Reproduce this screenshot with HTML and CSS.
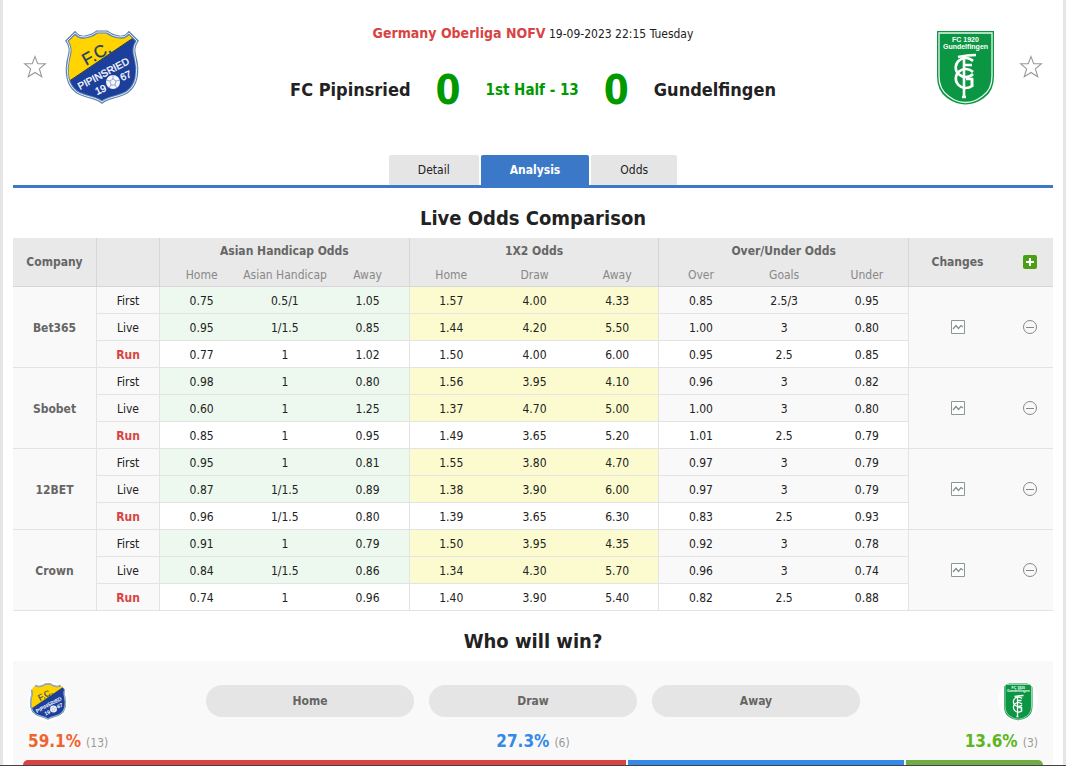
FILE: index.html
```html
<!DOCTYPE html>
<html lang="en">
<head>
<meta charset="utf-8">
<title>FC Pipinsried vs Gundelfingen</title>
<link rel="stylesheet" href="styles.css">
</head>
<body>
<svg class="defs" aria-hidden="true">
  <symbol id="star" viewBox="0 0 22 22"><path fill="none" stroke="#999" d="M11 1.500L13.500 8H20.500L15 12.700L17.200 20L11 16L4.800 20L7 12.700L1.500 8H8.500Z"/></symbol>
  <symbol id="chart" viewBox="0 0 14 14"><path fill="#fff" stroke="#8a9a93" d="M.5.5H13.500V13.500H.5Z"/><path fill="none" stroke="#7f8f88" stroke-width="1.200" d="M2 9L5 5.500L7.500 8.500L10 5.500L12 7"/></symbol>
  <symbol id="minus" viewBox="0 0 14 14"><circle cx="7" cy="7" r="6.500" fill="none" stroke="#888"/><path stroke="#888" d="M3 7.500H11"/></symbol>
  <symbol id="plus" viewBox="0 0 14 14"><rect width="14" height="14" rx="2" fill="#4a9f14"/><path stroke="#fff" stroke-width="2" d="M3 7H11M7 3V11"/></symbol>
</svg>
<div class="page">
  <main class="content">
    <header class="match">
      <button class="icon-btn" aria-label="Follow FC Pipinsried"><svg class="star"><use href="#star"/></svg></button>
      <svg class="crest" viewBox="0 0 80 80" role="img" aria-label="FC Pipinsried">
        <g id="pipinsried">
          <clipPath id="shield-clip"><path d="M13 7Q17 12 23 11Q30 10 35 6H45Q50 10 57 11Q63 12 67 7L75 15Q70 22 73 31Q76 42 74 52Q72 61 65 66C57 71 46 71 40 76C34 71 23 71 15 66Q8 61 6 52Q4 42 7 31Q10 22 5 15Z"/></clipPath>
          <g clip-path="url(#shield-clip)">
            <path fill="#ffd400" d="M0 0H80V80H0Z"/>
            <path fill="#1c3f9c" d="M0 60L80 6V80H0Z"/>
            <path stroke="#2c3d50" d="M0 60L80 6"/>
          </g>
          <path fill="none" stroke="#5b7fae" stroke-width="3" d="M13 7Q17 12 23 11Q30 10 35 6H45Q50 10 57 11Q63 12 67 7L75 15Q70 22 73 31Q76 42 74 52Q72 61 65 66C57 71 46 71 40 76C34 71 23 71 15 66Q8 61 6 52Q4 42 7 31Q10 22 5 15Z"/>
          <path fill="none" stroke="#e4edf5" d="M13 7Q17 12 23 11Q30 10 35 6H45Q50 10 57 11Q63 12 67 7L75 15Q70 22 73 31Q76 42 74 52Q72 61 65 66C57 71 46 71 40 76C34 71 23 71 15 66Q8 61 6 52Q4 42 7 31Q10 22 5 15Z"/>
          <g font-family="Liberation Sans, sans-serif">
            <text font-size="17" fill="#1d3f63" stroke="#1d3f63" stroke-width=".3" transform="translate(24 40) rotate(-29)">F.C.</text>
            <g fill="#fff" stroke="#fff" stroke-width=".3">
              <text font-size="10" transform="translate(18 64) rotate(-28)">PIPINSRIED</text>
              <text font-size="10" transform="translate(35 69) rotate(-24)">19</text>
              <text font-size="10" transform="translate(60 55) rotate(-24)">67</text>
            </g>
          </g>
          <circle cx="51" cy="56" r="7" fill="#f4f7fb"/>
          <path fill="none" stroke="#7f93c4" stroke-width=".8" d="M51 53L54 55L53 59H49L48 55ZM51 53V49M54 55L58 54M53 59L55 62M49 59L47 62M48 55L44 54"/>
        </g>
      </svg>
      <div class="summary">
        <div class="league"><a href="#league">Germany Oberliga NOFV</a> <time>19-09-2023 22:15 Tuesday</time></div>
        <div class="scoreline">
          <span class="team">FC Pipinsried</span>
          <span class="goals">0</span>
          <span class="status">1st Half - 13</span>
          <span class="goals">0</span>
          <span class="team">Gundelfingen</span>
        </div>
      </div>
      <svg class="crest" viewBox="0 0 80 80" role="img" aria-label="Gundelfingen">
        <g id="gundelfingen">
          <path fill="#0a9643" d="M12 5H69V50Q69 65 59 72Q50 78.500 40.500 78.500Q31 78.500 22 72Q12 65 12 50Z"/>
          <path fill="none" stroke="#e8f6ec" stroke-width="1.300" d="M14 7H67V50Q67 64 57 70.500Q49 76.500 40.500 76.500Q32 76.500 24 70.500Q14 64 14 50Z"/>
          <g font-family="Liberation Sans, sans-serif" font-weight="700" fill="#fff" text-anchor="middle">
            <text x="40.500" y="15.500" font-size="7">FC 1920</text>
            <text x="40.500" y="22.500" font-size="7">Gundelfingen</text>
          </g>
          <g fill="none" stroke="#fff" stroke-width="2.600">
            <path d="M33 31Q42 29 51 29M39 30V72M37 71H41M39 39H47"/>
            <path d="M48 35A10 9.500 0 1 0 48 48"/>
            <path d="M48 46A10 9.500 0 1 0 47 60V53H41"/>
            <path d="M47 61V53"/>
          </g>
        </g>
      </svg>
      <button class="icon-btn" aria-label="Follow Gundelfingen"><svg class="star"><use href="#star"/></svg></button>
    </header>
    <nav class="tabs">
      <a href="#detail">Detail</a>
      <a class="active" href="#analysis">Analysis</a>
      <a href="#odds">Odds</a>
    </nav>
    <h2>Live Odds Comparison</h2>
    <table class="odds">
      <colgroup><col class="c-company"><col class="c-type"><col span="9"><col class="c-changes"><col class="c-toggle"></colgroup>
      <thead>
        <tr><th rowspan="2" class="edge">Company</th><th rowspan="2" class="edge"></th><th colspan="3" class="edge group">Asian Handicap Odds</th><th colspan="3" class="edge group">1X2 Odds</th><th colspan="3" class="edge group">Over/Under Odds</th><th rowspan="2">Changes</th><th rowspan="2"><button class="icon-btn" aria-label="Add company"><svg class="icon"><use href="#plus"/></svg></button></th></tr>
        <tr class="sub"><th>Home</th><th>Asian Handicap</th><th class="edge">Away</th><th>Home</th><th>Draw</th><th class="edge">Away</th><th>Over</th><th>Goals</th><th class="edge">Under</th></tr>
      </thead>
      <tbody>
        <tr><th rowspan="3" class="edge">Bet365</th><td class="type">First</td><td class="ah">0.75</td><td class="ah">0.5/1</td><td class="ah edge">1.05</td><td class="win">1.57</td><td class="win">4.00</td><td class="win edge">4.33</td><td class="ou">0.85</td><td class="ou">2.5/3</td><td class="ou edge">0.95</td><td rowspan="3"><button class="icon-btn" aria-label="Bet365 changes"><svg class="icon"><use href="#chart"/></svg></button></td><td rowspan="3"><button class="icon-btn" aria-label="Hide Bet365"><svg class="icon"><use href="#minus"/></svg></button></td></tr>
        <tr><td class="type">Live</td><td class="ah">0.95</td><td class="ah">1/1.5</td><td class="ah edge">0.85</td><td class="win">1.44</td><td class="win">4.20</td><td class="win edge">5.50</td><td class="ou">1.00</td><td class="ou">3</td><td class="ou edge">0.80</td></tr>
        <tr class="run"><td class="type">Run</td><td>0.77</td><td>1</td><td class="edge">1.02</td><td>1.50</td><td>4.00</td><td class="edge">6.00</td><td>0.95</td><td>2.5</td><td class="edge">0.85</td></tr>
      </tbody>
      <tbody>
        <tr><th rowspan="3" class="edge">Sbobet</th><td class="type">First</td><td class="ah">0.98</td><td class="ah">1</td><td class="ah edge">0.80</td><td class="win">1.56</td><td class="win">3.95</td><td class="win edge">4.10</td><td class="ou">0.96</td><td class="ou">3</td><td class="ou edge">0.82</td><td rowspan="3"><button class="icon-btn" aria-label="Sbobet changes"><svg class="icon"><use href="#chart"/></svg></button></td><td rowspan="3"><button class="icon-btn" aria-label="Hide Sbobet"><svg class="icon"><use href="#minus"/></svg></button></td></tr>
        <tr><td class="type">Live</td><td class="ah">0.60</td><td class="ah">1</td><td class="ah edge">1.25</td><td class="win">1.37</td><td class="win">4.70</td><td class="win edge">5.00</td><td class="ou">1.00</td><td class="ou">3</td><td class="ou edge">0.80</td></tr>
        <tr class="run"><td class="type">Run</td><td>0.85</td><td>1</td><td class="edge">0.95</td><td>1.49</td><td>3.65</td><td class="edge">5.20</td><td>1.01</td><td>2.5</td><td class="edge">0.79</td></tr>
      </tbody>
      <tbody>
        <tr><th rowspan="3" class="edge">12BET</th><td class="type">First</td><td class="ah">0.95</td><td class="ah">1</td><td class="ah edge">0.81</td><td class="win">1.55</td><td class="win">3.80</td><td class="win edge">4.70</td><td class="ou">0.97</td><td class="ou">3</td><td class="ou edge">0.79</td><td rowspan="3"><button class="icon-btn" aria-label="12BET changes"><svg class="icon"><use href="#chart"/></svg></button></td><td rowspan="3"><button class="icon-btn" aria-label="Hide 12BET"><svg class="icon"><use href="#minus"/></svg></button></td></tr>
        <tr><td class="type">Live</td><td class="ah">0.87</td><td class="ah">1/1.5</td><td class="ah edge">0.89</td><td class="win">1.38</td><td class="win">3.90</td><td class="win edge">6.00</td><td class="ou">0.97</td><td class="ou">3</td><td class="ou edge">0.79</td></tr>
        <tr class="run"><td class="type">Run</td><td>0.96</td><td>1/1.5</td><td class="edge">0.80</td><td>1.39</td><td>3.65</td><td class="edge">6.30</td><td>0.83</td><td>2.5</td><td class="edge">0.93</td></tr>
      </tbody>
      <tbody>
        <tr><th rowspan="3" class="edge">Crown</th><td class="type">First</td><td class="ah">0.91</td><td class="ah">1</td><td class="ah edge">0.79</td><td class="win">1.50</td><td class="win">3.95</td><td class="win edge">4.35</td><td class="ou">0.92</td><td class="ou">3</td><td class="ou edge">0.78</td><td rowspan="3"><button class="icon-btn" aria-label="Crown changes"><svg class="icon"><use href="#chart"/></svg></button></td><td rowspan="3"><button class="icon-btn" aria-label="Hide Crown"><svg class="icon"><use href="#minus"/></svg></button></td></tr>
        <tr><td class="type">Live</td><td class="ah">0.84</td><td class="ah">1/1.5</td><td class="ah edge">0.86</td><td class="win">1.34</td><td class="win">4.30</td><td class="win edge">5.70</td><td class="ou">0.96</td><td class="ou">3</td><td class="ou edge">0.74</td></tr>
        <tr class="run"><td class="type">Run</td><td>0.74</td><td>1</td><td class="edge">0.96</td><td>1.40</td><td>3.90</td><td class="edge">5.40</td><td>0.82</td><td>2.5</td><td class="edge">0.88</td></tr>
      </tbody>
    </table>
    <h2>Who will win?</h2>
    <section class="poll">
      <div class="poll-row">
        <svg class="badge" viewBox="0 0 80 80" role="img" aria-label="FC Pipinsried"><use href="#pipinsried"/></svg>
        <div class="choices"><button>Home</button><button>Draw</button><button>Away</button></div>
        <svg class="badge" viewBox="0 0 80 80" role="img" aria-label="Gundelfingen"><use href="#gundelfingen"/></svg>
      </div>
      <div class="shares">
        <div class="home"><strong>59.1%</strong><span>(13)</span></div>
        <div class="draw"><strong>27.3%</strong><span>(6)</span></div>
        <div class="away"><strong>13.6%</strong><span>(3)</span></div>
      </div>
      <div class="bar"><span class="bar-home" style="width:59.1%"></span><span class="bar-draw" style="width:27.3%"></span><span class="bar-away" style="width:13.6%"></span></div>
    </section>
  </main>
  <div class="bottom-line"></div>
</div>
</body>
</html>
```
FILE: styles.css
```css
* { box-sizing: border-box; }
body {
  margin: 0;
  background: #fff;
  color: #222;
  font: 12px/18px Tahoma, "DejaVu Sans Condensed", "Noto Sans", sans-serif;
}
a { color: inherit; text-decoration: none; }
button { font: inherit; color: inherit; border: 0; padding: 0; background: none; cursor: pointer; }
svg { display: block; }
.defs { position: absolute; width: 0; height: 0; }
.content { padding: 0 10px; border: solid #e5e5e5; border-width: 0 3px; }

.match { display: flex; align-items: flex-start; height: 155px; padding: 24px 10px 0; }
.match .icon-btn { margin-top: 31px; }
.star { width: 24px; height: 24px; }
.crest { width: 80px; height: 80px; margin: 2px 14px 0 15px; }
.summary { flex: 1; text-align: center; }
.league a { color: #d94343; font-size: 14px; font-weight: 700; }
.scoreline { display: flex; justify-content: center; align-items: center; gap: 25px; margin-top: 23px; height: 48px; font-weight: 700; white-space: nowrap; }
.team { font-size: 18px; }
.goals { font-size: 40px; color: #090; }
.status { font-size: 15px; color: #090; }

.tabs { display: flex; justify-content: center; gap: 2px; border-bottom: 3px solid #3c78c8; }
.tabs a { padding: 0 29px; line-height: 30px; background: #e5e5e5; border-radius: 2px 2px 0 0; }
.tabs .active { background: #3c78c8; color: #fff; font-weight: 700; }

h2 { margin: 0; padding-top: 10px; height: 50px; font-size: 20px; line-height: 40px; text-align: center; }

.odds { width: 100%; table-layout: fixed; border-collapse: separate; border-spacing: 0; text-align: center; white-space: nowrap; }
.c-company { width: 84px; }
.c-type { width: 63px; }
.c-changes { width: 97px; }
.c-toggle { width: 47px; }
.odds th, .odds td { padding: 0; height: 27px; border-bottom: 1px solid #e3e3e3; }
.odds tbody tr > :not(:has(button)) { padding-top: 2px; }
.odds th { color: #666; }
.odds .edge, .odds .type { border-right: 1px solid #e3e3e3; }
.odds thead th, .odds thead .edge { background: #e9e9e9; border-color: #d6d6d6; height: 25px; }
.odds thead .group { border-bottom: 0; }
.odds .sub th { height: 24px; color: #888; font-weight: 400; }
.odds tbody th, .odds td[rowspan], .odds .type, .ou { background: #f9f9f9; }
.ah { background: #edf8ee; }
.win { background: #fbfbcf; }
.odds .run .type { color: #d94343; font-weight: 700; }
.odds .icon-btn { display: block; margin: 0 auto; }
.icon { width: 14px; height: 14px; }

.poll { background: #f9f9f9; padding: 20px 10px 0; }
.poll-row { display: flex; align-items: center; justify-content: space-between; padding: 0 5px; }
.badge { width: 40px; height: 40px; border-radius: 50%; background: #fff; }
.choices { display: flex; gap: 15px; }
.choices button { width: 208px; height: 32px; border-radius: 16px; background: #e5e5e5; color: #666; font-weight: 700; }
.shares { display: grid; grid-template-columns: 1fr 1fr 1fr; padding: 8px 5px 5px; line-height: 24px; color: #999; }
.shares strong { margin-right: 5px; font-size: 17px; }
.shares .draw { text-align: center; }
.shares .away { text-align: right; }
.home strong { color: #f0632f; }
.draw strong { color: #338ae8; }
.away strong { color: #5cb61e; }
.bar { display: flex; height: 5px; border-radius: 5px 5px 0 0; overflow: hidden; }
.bar-home { background: #d94343; }
.bar-draw { background: #338ae8; border-left: 2px solid #f9f9f9; }
.bar-away { background: #70ad47; border-left: 2px solid #f9f9f9; }
.bottom-line { height: 1px; background: #444; }
```
